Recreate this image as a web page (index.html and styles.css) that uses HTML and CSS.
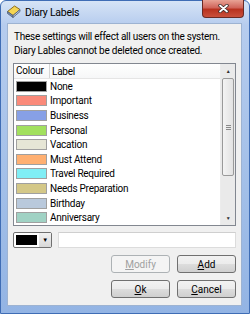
FILE: index.html
```html
<!DOCTYPE html>
<html>
  <head>
    <title>Diary Labels</title>
    <link rel="stylesheet" href="styles.css">
  </head>
  <body>
    <div class="window">
      <div class="titlebar">
        <svg class="app-icon" width="14" height="13" viewBox="0 0 14 13">
          <path d="M0.5 6.5 L7.5 1 L13 4.5 L6 10.5 Z" fill="#f5d553" stroke="#8c6d1f" stroke-width="1"/>
          <path d="M0.5 6.5 L0.5 8.5 L6 12.5 L6 10.5 Z" fill="#7c8fb0" stroke="#4d5d7a" stroke-width="0.8"/>
          <path d="M6 10.5 L13 4.5 L13 6.5 L6 12.5 Z" fill="#b9c6dc" stroke="#4d5d7a" stroke-width="0.8"/>
        </svg>
        <span class="title">Diary Labels</span>
        <div class="close">
          <svg width="11" height="9" viewBox="0 0 11 9">
            <path d="M2 1.5 L9 7.5 M9 1.5 L2 7.5" stroke="#3a2a2a" stroke-width="3.4" stroke-linecap="round"/>
            <path d="M2 1.5 L9 7.5 M9 1.5 L2 7.5" stroke="#ffffff" stroke-width="1.8" stroke-linecap="round"/>
          </svg>
        </div>
      </div>
      <div class="client">
        <p class="note">These settings will effect all users on the system.<br>Diary Lables cannot be deleted once created.</p>
        <div class="list">
          <div class="list-main">
            <div class="list-head">
              <span class="col-colour">Colour</span>
              <span class="col-label">Label</span>
            </div>
            <div class="row"><span class="swatch c-none"></span><span class="name">None</span></div>
            <div class="row"><span class="swatch c-important"></span><span class="name">Important</span></div>
            <div class="row"><span class="swatch c-business"></span><span class="name">Business</span></div>
            <div class="row"><span class="swatch c-personal"></span><span class="name">Personal</span></div>
            <div class="row"><span class="swatch c-vacation"></span><span class="name">Vacation</span></div>
            <div class="row"><span class="swatch c-must"></span><span class="name">Must Attend</span></div>
            <div class="row"><span class="swatch c-travel"></span><span class="name">Travel Required</span></div>
            <div class="row"><span class="swatch c-needs"></span><span class="name">Needs Preparation</span></div>
            <div class="row"><span class="swatch c-birthday"></span><span class="name">Birthday</span></div>
            <div class="row"><span class="swatch c-anniv"></span><span class="name">Anniversary</span></div>
          </div>
          <div class="scrollbar">
            <div class="sb-btn">&#9650;</div>
            <div class="sb-thumb"><span class="grip"></span></div>
            <div class="sb-track"></div>
            <div class="sb-btn">&#9660;</div>
          </div>
        </div>
        <div class="edit-row">
          <div class="colour-combo">
            <span class="combo-swatch"></span>
            <span class="combo-drop">&#9660;</span>
          </div>
          <div class="label-input"></div>
        </div>
        <div class="btn-row">
          <button class="btn" disabled><u>M</u>odify</button>
          <button class="btn"><u>A</u>dd</button>
        </div>
        <div class="btn-row">
          <button class="btn"><u>O</u>k</button>
          <button class="btn"><u>C</u>ancel</button>
        </div>
      </div>
    </div>
  </body>
</html>
```

FILE: styles.css
```css
body {
  margin: 0;
  font-family: Roboto, sans-serif;
  font-size: 10px;
  letter-spacing: -0.25px;
  color: #000;
  background: #fff;
}
.window {
  width: 250px;
  height: 314px;
  box-sizing: border-box;
  display: flex;
  flex-direction: column;
  padding: 0 7px 7px 6px;
  border: 1px solid #3f6db5;
  border-radius: 6px 6px 0 0;
  background: linear-gradient(#d6e4f6, #b6ccee 24px, #a2bfe8 60%, #93b4e4);
}
.titlebar {
  height: 23px;
  display: flex;
  align-items: flex-start;
}
.app-icon {
  margin: 4px 4px 0 0;
}
.title {
  margin-top: 5px;
  font-size: 10.5px;
  line-height: 14px;
}
.close {
  margin: -1px -2px 0 auto;
  width: 40px;
  height: 17px;
  display: flex;
  align-items: center;
  justify-content: center;
  border: 1px solid #6a2a24;
  border-top: none;
  border-radius: 0 0 4px 4px;
  background: linear-gradient(#e8a395, #d0655a 45%, #b8321f 55%, #c9503c);
}
.client {
  flex: 1;
  display: flex;
  flex-direction: column;
  padding: 0 5px 7px 5px;
  border: 1px solid #9db3d2;
  background: #f0f0f0;
}
.note {
  margin: 6px 0 0 1px;
  line-height: 14px;
  white-space: nowrap;
}
.list {
  margin-top: 5px;
  height: 163px;
  box-sizing: border-box;
  display: flex;
  border: 1px solid #828790;
  background: #fff;
}
.list-main {
  flex: 1;
  display: flex;
  flex-direction: column;
}
.list-head {
  height: 15px;
  box-sizing: border-box;
  display: flex;
  align-items: center;
  border-bottom: 1px solid #e5e5e5;
  background: linear-gradient(#fff, #f6f7f8);
}
.col-colour {
  width: 33px;
  padding-left: 2px;
  border-right: 1px solid #d5d5d5;
  line-height: 14px;
}
.col-label {
  padding-left: 2px;
}
.row {
  height: 14.6px;
  display: flex;
  align-items: center;
}
.swatch {
  width: 29px;
  height: 9px;
  margin: 0 3px 0 2px;
  border: 1px solid #a0a0a0;
}
.c-none { background: #000; }
.c-important { background: #fa8a7a; }
.c-business { background: #87a0e6; }
.c-personal { background: #a2e05e; }
.c-vacation { background: #e6e6d6; }
.c-must { background: #ffb072; }
.c-travel { background: #80eef5; }
.c-needs { background: #d4c888; }
.c-birthday { background: #b9c9dc; }
.c-anniv { background: #a0d2c4; }
.scrollbar {
  width: 14px;
  display: flex;
  flex-direction: column;
  background: #eaeaea;
  border-left: 1px solid #ececec;
}
.sb-btn {
  height: 14px;
  font-size: 5px;
  line-height: 14px;
  text-align: center;
  color: #303030;
}
.sb-thumb {
  height: 98px;
  box-sizing: border-box;
  margin: 0 1px;
  display: flex;
  align-items: center;
  justify-content: center;
  border: 1px solid #9a9a9a;
  border-radius: 2px;
  background: linear-gradient(to right, #f4f4f4, #e2e2e2);
}
.grip {
  width: 5px;
  height: 5px;
  background: repeating-linear-gradient(#8a8a8a 0 1px, transparent 1px 2px);
}
.sb-track {
  flex: 1;
}
.edit-row {
  margin-top: 6px;
  height: 16px;
  display: flex;
  gap: 6px;
}
.colour-combo {
  width: 39px;
  box-sizing: border-box;
  display: flex;
  align-items: center;
  border: 1px solid #707070;
  border-radius: 2px;
  background: #fff;
}
.combo-swatch {
  width: 21px;
  height: 10px;
  margin-left: 2px;
  background: #000;
}
.combo-drop {
  flex: 1;
  align-self: stretch;
  margin-left: 2px;
  font-size: 6px;
  line-height: 14px;
  text-align: center;
  background: linear-gradient(#f2f2f2, #d8d8d8);
}
.label-input {
  flex: 1;
  box-sizing: border-box;
  border: 1px solid #dcdcdc;
  border-top-color: #cfcfcf;
  background: #fff;
}
.btn-row {
  margin-top: 7px;
  display: flex;
  justify-content: flex-end;
  gap: 7px;
}
.btn {
  width: 59px;
  height: 18px;
  padding: 0;
  font-family: Roboto, sans-serif;
  font-size: 10px;
  color: #000;
  border: 1px solid #707070;
  border-radius: 3px;
  background: linear-gradient(#f2f2f2 0, #ebebeb 50%, #dddddd 50%, #cfcfcf);
}
.btn:disabled {
  color: #a0a0a0;
  border-color: #adb2b5;
  background: #f4f4f4;
}
```
